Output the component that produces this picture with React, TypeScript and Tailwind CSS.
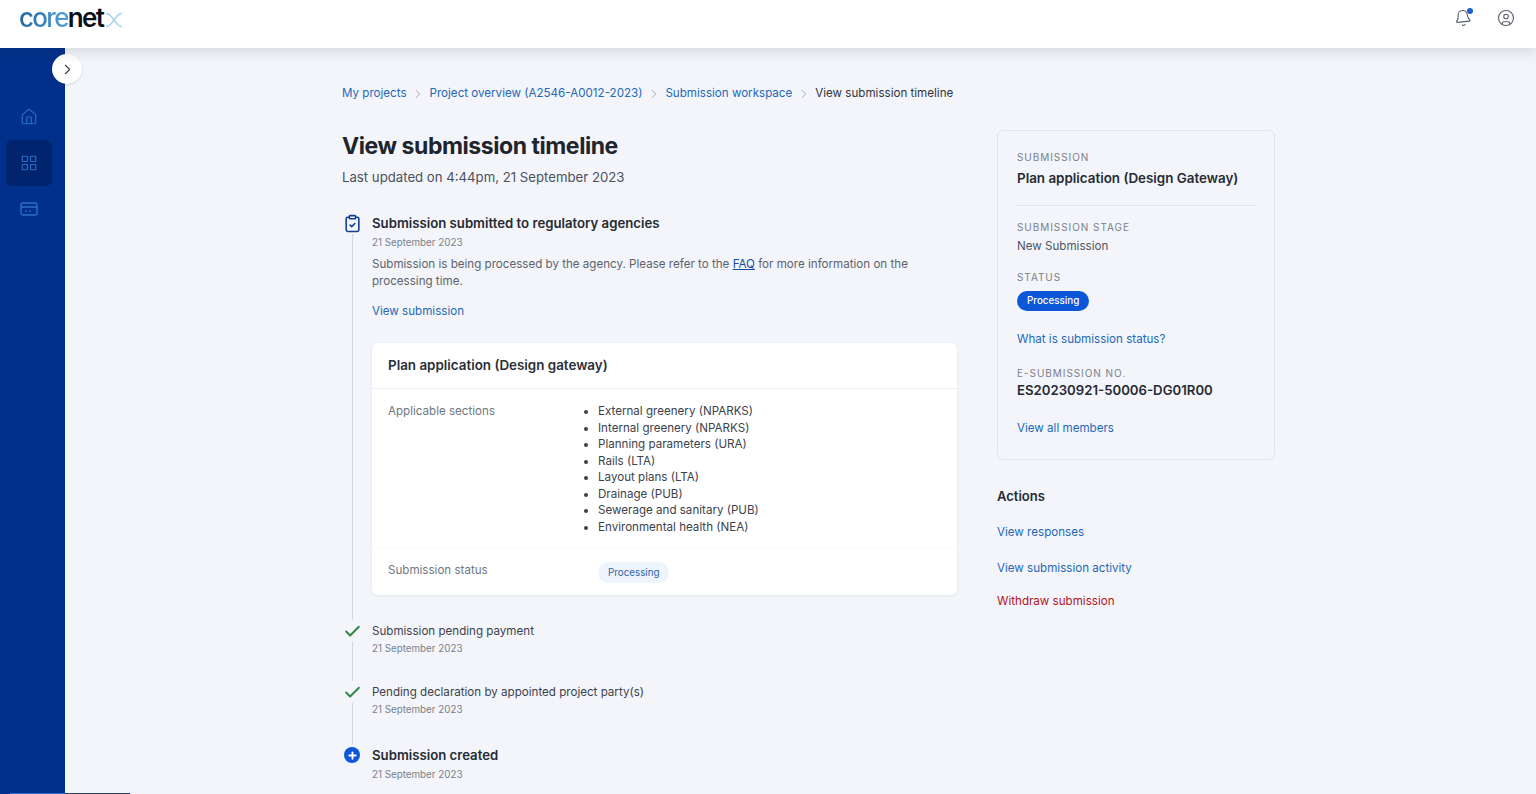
import { ChevronRight, House, LayoutGrid, Bell, CircleUser, ClipboardCheck, Check, Plus } from "lucide-react";

const font = { fontFamily: '"Inter", "Noto Sans", sans-serif' };

function Crumb({ label, last }: { label: string; last?: boolean }) {
  if (last) {
    return <span className="text-[#2f3540]">{label}</span>;
  }
  return (
    <>
      <a className="text-[#2468b8]">{label}</a>
      <ChevronRight className="w-[14px] h-[14px] mx-[4.500px] shrink-0 text-[#9aa1ab]" strokeWidth={1.5} />
    </>
  );
}

function Logo() {
  return (
    <div className="flex items-center h-[48px] pl-[19px] pb-[12px]">
      <span className="text-[26px] leading-none font-medium tracking-[-1.700px] bg-linear-to-r from-[#25679f] to-[#4fa3dc] bg-clip-text text-transparent">core</span>
      <span className="text-[26px] leading-none font-semibold tracking-[-1.700px] text-[#0b0f1a]">net</span>
      <svg width="18" height="16" viewBox="0 0 18 16" className="ml-[2px] mt-[3px]" fill="none" stroke="#a9d3e6" strokeWidth="1.6">
        <path d="M1 1.500c4 0 5 3 8 6.500s4 6.500 8 6.500" />
        <path d="M1 14.500c4 0 5-3 8-6.500s4-6.500 8-6.500" />
      </svg>
    </div>
  );
}

function Sidebar() {
  return (
    <aside className="relative w-[65px] shrink-0 bg-[#00308c] flex flex-col pl-[6px] pt-[46px]">
      <div className="absolute left-[52px] top-[6px] w-[30px] h-[30px] rounded-full bg-white flex items-center justify-center shadow-sm">
        <ChevronRight className="w-[17px] h-[17px] text-[#3a3f4a]" strokeWidth={1.6} />
      </div>
      <div className="h-[46px] w-[46px] flex items-center justify-center">
        <House className="w-[18px] h-[18px] text-[#2b6fc4]" strokeWidth={1.5} />
      </div>
      <div className="h-[46px] w-[46px] rounded-[6px] bg-[#00246d] flex items-center justify-center">
        <LayoutGrid className="w-[18px] h-[18px] text-[#2b6fc4]" strokeWidth={1.5} />
      </div>
      <div className="h-[46px] w-[46px] flex items-center justify-center">
        <svg width="18" height="18" viewBox="0 0 18 18" fill="none" stroke="#2b6fc4" strokeWidth="1.4">
          <rect x="1" y="3" width="16" height="12" rx="2" />
          <path d="M1 7h16M5 11h1.500M9 11h1.500" />
        </svg>
      </div>
    </aside>
  );
}

function TimelineItem({
  icon,
  title,
  strong,
  line,
  className,
  children,
}: {
  icon: React.ReactNode;
  title: string;
  strong?: boolean;
  line?: boolean;
  className?: string;
  children?: React.ReactNode;
}) {
  return (
    <div className={"flex " + (className ?? "")}>
      <div className="w-[20px] mr-[10px] shrink-0 flex flex-col items-center">
        <div className="h-[22px] flex items-center justify-center">{icon}</div>
        {line && <div className="w-px grow bg-[#d3d7dd]" />}
      </div>
      <div className="grow min-w-0">
        <div className={strong ? "text-[13.200px] leading-[22px] font-semibold text-[#262b33]" : "text-[11.600px] leading-[22px] text-[#3c424c]"}>
          {title}
        </div>
        <div className={"text-[9.800px] leading-[14px] text-[#7a808a] " + (strong ? "mt-[2px]" : "mt-0")}>21 September 2023</div>
        {children}
      </div>
    </div>
  );
}

function PlanCard() {
  const sections = [
    "External greenery (NPARKS)",
    "Internal greenery (NPARKS)",
    "Planning parameters (URA)",
    "Rails (LTA)",
    "Layout plans (LTA)",
    "Drainage (PUB)",
    "Sewerage and sanitary (PUB)",
    "Environmental health (NEA)",
  ];
  return (
    <div className="mt-[23px] mb-[25px] bg-white rounded-[6px] shadow-[0_1px_3px_rgba(30,50,90,0.08)]">
      <div className="h-[46px] px-[16px] flex items-center border-b border-[#eef0f3] text-[13.400px] font-semibold text-[#2a2f38]">
        Plan application (Design gateway)
      </div>
      <div className="flex px-[16px] pt-[14px]">
        <div className="w-[196px] shrink-0 text-[11.600px] leading-[16.500px] text-[#71777f]">Applicable sections</div>
        <ul className="list-disc pl-[14px] text-[11.600px] leading-[16.500px] text-[#3c424c]">
          {sections.map((s) => (
            <li key={s}>{s}</li>
          ))}
        </ul>
      </div>
      <div className="flex items-center px-[16px] mt-[13px] h-[47px] border-t border-[#f8f9fa]">
        <div className="w-[210px] shrink-0 text-[11.600px] text-[#71777f] -mt-[3px]">Submission status</div>
        <span className="h-[21px] px-[10px] rounded-full bg-[#edf4fc] text-[9.800px] leading-[21px] text-[#2f63a8]">Processing</span>
      </div>
    </div>
  );
}

function Label({ children, className }: { children: React.ReactNode; className?: string }) {
  return <div className={"text-[10px] leading-[14px] tracking-[0.95px] text-[#7a808a] " + (className ?? "")}>{children}</div>;
}

function SummaryCard() {
  return (
    <div className="border border-[#e2e5ea] rounded-[6px] px-[19px] pt-[19px] h-[330px]">
      <Label>SUBMISSION</Label>
      <div className="mt-[4px] text-[13.400px] leading-[20px] font-semibold text-[#262b33]">Plan application (Design Gateway)</div>
      <div className="mt-[17px] border-t border-[#dfe2e7]" />
      <Label className="mt-[14px]">SUBMISSION STAGE</Label>
      <div className="mt-[3px] text-[11.600px] leading-[18px] text-[#50565f]">New Submission</div>
      <Label className="mt-[15px]">STATUS</Label>
      <span className="inline-block mt-[7px] h-[20px] px-[10px] rounded-full bg-[#0c56d8] text-[9.800px] leading-[20px] font-medium text-white">Processing</span>
      <a className="block mt-[19px] text-[11.600px] leading-[18px] text-[#2468b8]">What is submission status?</a>
      <Label className="mt-[18px]">E-SUBMISSION NO.</Label>
      <div className="mt-0 text-[13.200px] leading-[20px] font-semibold text-[#262b33]">ES20230921-50006-DG01R00</div>
      <a className="block mt-[19px] text-[11.600px] leading-[18px] text-[#2468b8]">View all members</a>
    </div>
  );
}

export default function App() {
  return (
    <div className="relative w-[1536px] h-[794px] overflow-hidden flex flex-col bg-[#f3f5fa]" style={font}>
      <header className="relative z-10 h-[48px] shrink-0 bg-white flex items-start justify-between shadow-[0_4px_12px_rgba(30,40,60,0.14)]">
        <Logo />
        <div className="flex items-center gap-[25px] pr-[21px] pt-[9px]">
          <div className="relative">
            <Bell className="w-[18px] h-[18px] text-[#5b616b] -rotate-6" strokeWidth={1.5} />
            <span className="absolute -top-[1px] right-[-1px] w-[6px] h-[6px] rounded-full bg-[#1d5fc4]" />
          </div>
          <CircleUser className="w-[18px] h-[18px] text-[#5b616b]" strokeWidth={1.5} />
        </div>
      </header>

      <div className="flex grow min-h-0">
        <Sidebar />
        <main className="grow flex pl-[277px] pt-[36px]">
          <div className="w-[615px] shrink-0">
            <nav className="flex items-center h-[16px] mt-[2px] text-[11.600px] whitespace-nowrap">
              <Crumb label="My projects" />
              <Crumb label="Project overview (A2546-A0012-2023)" />
              <Crumb label="Submission workspace" />
              <Crumb label="View submission timeline" last />
            </nav>
            <h1 className="mt-[28px] text-[23px] leading-[32px] font-bold tracking-[-0.44px] text-[#20242c]">View submission timeline</h1>
            <p className="mt-[5px] text-[13.200px] leading-[20px] text-[#4b515b]">Last updated on 4:44pm, 21 September 2023</p>

            <div className="mt-[25px]">
              <TimelineItem
                strong
                line
                title="Submission submitted to regulatory agencies"
                icon={<ClipboardCheck className="w-[19px] h-[19px] text-[#123f94]" strokeWidth={2} />}
              >
                <p className="mt-[6px] text-[11.600px] leading-[17px] text-[#5d636c]">
                  Submission is being processed by the agency. Please refer to the{" "}
                  <a className="underline text-[#12509f]">FAQ</a> for more information on the processing time.
                </p>
                <a className="block mt-[13px] text-[11.600px] leading-[17px] text-[#2468b8]">View submission</a>
                <PlanCard />
              </TimelineItem>
              <TimelineItem
                line
                className="h-[61px]"
                title="Submission pending payment"
                icon={<Check className="w-[19px] h-[19px] text-[#2e8540]" strokeWidth={2.4} />}
              />
              <TimelineItem
                line
                className="h-[63px]"
                title="Pending declaration by appointed project party(s)"
                icon={<Check className="w-[19px] h-[19px] text-[#2e8540]" strokeWidth={2.4} />}
              />
              <TimelineItem
                strong
                title="Submission created"
                icon={
                  <span className="w-[16px] h-[16px] rounded-full bg-[#0c56d8] flex items-center justify-center">
                    <Plus className="w-[11px] h-[11px] text-white" strokeWidth={4} />
                  </span>
                }
              />
            </div>
          </div>

          <div className="w-[278px] ml-[40px] shrink-0 pt-[46px]">
            <SummaryCard />
            <div className="mt-[26px] text-[13px] leading-[20px] font-semibold text-[#262b33]">Actions</div>
            <a className="block mt-[17px] text-[11.600px] leading-[18px] text-[#2468b8]">View responses</a>
            <a className="block mt-[18px] text-[11.600px] leading-[18px] text-[#2468b8]">View submission activity</a>
            <a className="block mt-[15px] text-[11.600px] leading-[18px] text-[#b3131b]">Withdraw submission</a>
          </div>
        </main>
      </div>
      <div className="absolute left-[10px] bottom-0 flex h-px">
        <div className="w-[55px] bg-[#2a6fd0]" />
        <div className="w-[65px] bg-[#2f3f66]" />
      </div>
    </div>
  );
}
